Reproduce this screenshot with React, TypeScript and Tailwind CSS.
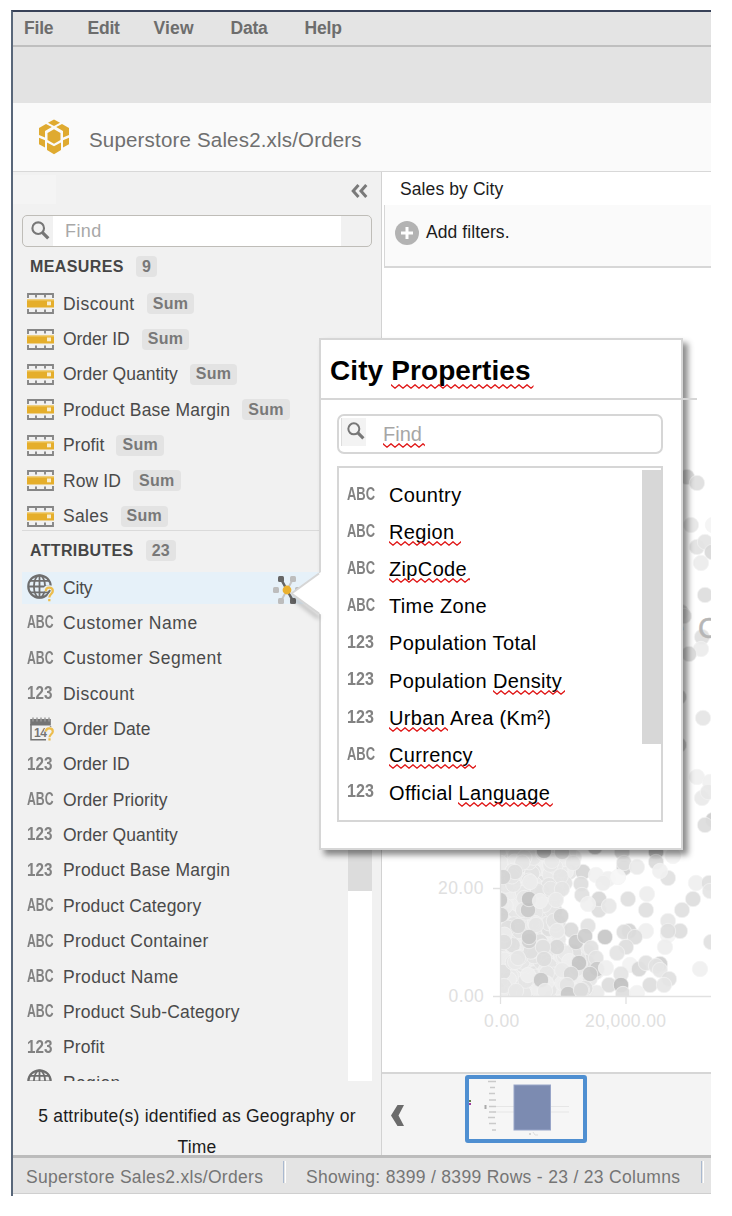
import React from "react";

const measures = [
  { name: "Discount", tracking: "tracking-[0.45px]" },
  { name: "Order ID", tracking: "tracking-[-0.05px]" },
  { name: "Order Quantity", tracking: "tracking-[0px]" },
  { name: "Product Base Margin", tracking: "tracking-[0.2px]" },
  { name: "Profit", tracking: "tracking-[0.1px]" },
  { name: "Row ID", tracking: "tracking-[0.1px]" },
  { name: "Sales", tracking: "tracking-[0.35px]" },
];

type Kind = "geo" | "abc" | "num" | "date";

const attributes: { name: string; kind: Kind; tracking: string }[] = [
  { name: "City", kind: "geo", tracking: "tracking-[-0.2px]" },
  { name: "Customer Name", kind: "abc", tracking: "tracking-[0.57px]" },
  { name: "Customer Segment", kind: "abc", tracking: "tracking-[0.53px]" },
  { name: "Discount", kind: "num", tracking: "tracking-[0.45px]" },
  { name: "Order Date", kind: "date", tracking: "tracking-[0.1px]" },
  { name: "Order ID", kind: "num", tracking: "tracking-[-0.05px]" },
  { name: "Order Priority", kind: "abc", tracking: "tracking-[0.03px]" },
  { name: "Order Quantity", kind: "num", tracking: "tracking-[0px]" },
  { name: "Product Base Margin", kind: "num", tracking: "tracking-[0.2px]" },
  { name: "Product Category", kind: "abc", tracking: "tracking-[0.13px]" },
  { name: "Product Container", kind: "abc", tracking: "tracking-[0.26px]" },
  { name: "Product Name", kind: "abc", tracking: "tracking-[0.31px]" },
  { name: "Product Sub-Category", kind: "abc", tracking: "tracking-[0.17px]" },
  { name: "Profit", kind: "num", tracking: "tracking-[0.1px]" },
  { name: "Region", kind: "geo", tracking: "tracking-[0.35px]" },
];

const properties: { kind: Kind; before?: string; marked?: string; after?: string; wide?: boolean; height: string }[] = [
  { kind: "abc", before: "Country", height: "h-[37.5px]" },
  { kind: "abc", marked: "Region", wide: true, height: "h-[37.5px]" },
  { kind: "abc", marked: "ZipCode", height: "h-[36.5px]" },
  { kind: "abc", before: "Time Zone", height: "h-[37.5px]" },
  { kind: "num", before: "Population Total", height: "h-[36.5px]" },
  { kind: "num", before: "Population ", marked: "Density", height: "h-[38px]" },
  { kind: "num", marked: "Urban", after: " Area (Km²)", height: "h-[37.5px]" },
  { kind: "abc", marked: "Currency", height: "h-[36.5px]" },
  { kind: "num", before: "Official ", marked: "Language", height: "h-[38px]" },
];

function TypeLabel({ kind }: { kind: "abc" | "num" }) {
  return kind === "abc" ? (
    <span className="inline-block origin-left scale-x-[0.7] font-bold text-[#828282]">ABC</span>
  ) : (
    <span className="inline-block origin-left scale-x-[0.87] font-bold text-[#828282]">123</span>
  );
}

function GlobeIcon({ query }: { query: boolean }) {
  return (
    <svg width="28" height="28" viewBox="0 0 28 28" fill="none" className="block">
      <circle cx="12.5" cy="12.5" r="11.2" stroke="#6e6e6e" strokeWidth="2.2" />
      <ellipse cx="12.5" cy="12.5" rx="5.6" ry="11.2" stroke="#6e6e6e" strokeWidth="1.8" />
      <path d="M12.500 1v23M1.500 12.500h22M3 6.800h19M3 18.300h19" stroke="#6e6e6e" strokeWidth="1.800" />
      {query && (
        <>
          <path d="M18.200 17.200c0-2.500 1.600-3.700 3.900-3.700 2.500 0 4 1.400 4 3.500 0 3-3.700 3.300-3.700 6.500M22.400 25v2.400" stroke="#e6f1f9" strokeWidth="4.500" />
          <path d="M18.800 17.200c0-2.300 1.300-3.600 3.400-3.600s3.600 1.300 3.600 3.400c0 2.900-3.500 3.200-3.500 6.500M22.300 25v2.300" stroke="#ecbd4d" strokeWidth="2.300" />
        </>
      )}
    </svg>
  );
}

function DateIcon() {
  return (
    <span className="relative block h-[24px] w-[27px]">
      <svg width="27" height="24" viewBox="0 0 27 24" fill="none" className="block">
        <path d="M4 7v15.800h15M23.500 9v3" stroke="#747474" strokeWidth="1.500" />
        <path d="M3.200 2h20.600v6.500H3.200z" fill="#747474" />
        <path d="M6 .5v4M10 .5v4M14 .5v4M18 .5v4M22 .5v4" stroke="#9a9a9a" strokeWidth="1.500" />
      </svg>
      <span className="absolute top-[9.500px] left-[7px] text-[12px] leading-none font-bold tracking-[-0.5px] text-[#747474]">14</span>
      <svg width="27" height="24" viewBox="0 0 27 24" fill="none" className="absolute top-0 left-0">
        <path d="M19 14.500c0-2 1.200-3.100 3.300-3.100s3.500 1.200 3.500 3c0 2.600-3.300 3-3.300 5.800" stroke="#f1f1f1" strokeWidth="4" />
        <path d="M19 14.500c0-2 1.200-3.100 3.300-3.100s3.500 1.200 3.500 3c0 2.600-3.300 3-3.300 5.800M22.500 21.300v2.200" stroke="#ecbd4d" strokeWidth="2.200" />
      </svg>
    </span>
  );
}

function MeasureIcon() {
  return (
    <svg width="27" height="21" viewBox="0 0 27 21" className="block">
      <path d="M1 5V1h25v4M9 1v3.500M18 1v3.500M1 16v4h25v-4M9 20v-3.500M18 20v-3.500" fill="none" stroke="#868686" strokeWidth="1.900" />
      <rect x="0" y="6.500" width="27" height="8" fill="#e5ae2b" />
      <rect x="0" y="6.500" width="27" height="1" fill="#f2cd70" />
      <rect x="20" y="8.500" width="4" height="3.800" fill="#f8edcf" />
    </svg>
  );
}

function SearchIcon({ size }: { size: number }) {
  return (
    <svg width={size} height={size} viewBox="0 0 19 19" fill="none" className="block">
      <circle cx="7.200" cy="7.200" r="5.800" stroke="#777" strokeWidth="2.100" />
      <path d="M11.300 11.300l6 6" stroke="#777" strokeWidth="3.300" />
    </svg>
  );
}

function NetworkIcon() {
  return (
    <svg width="28" height="28" viewBox="0 0 28 28" className="block">
      <path d="M14 14L20 3M14 14L8 25" stroke="#c6c6c6" strokeWidth="2" />
      <path d="M14 14L8 3M14 14l6 11" stroke="#666" strokeWidth="2.600" />
      <g fill="#bdbdbd">
        <rect x="17" y="0" width="6" height="6" rx="1.500" />
        <rect x="5" y="22" width="6" height="6" rx="1.500" />
        <rect x="0" y="11" width="6" height="6" rx="1.500" />
        <rect x="22" y="11" width="6" height="6" rx="1.500" />
      </g>
      <rect x="5" y="0" width="6" height="6" rx="1.500" fill="#666" />
      <rect x="17" y="22" width="6" height="6" rx="1.500" fill="#666" />
      <circle cx="14" cy="14" r="4.400" fill="#eab12f" />
    </svg>
  );
}

function CubeLogo() {
  return (
    <svg width="32" height="36" viewBox="0 0 32 36" className="block" fill="#dfaa30">
      <path d="M16 .5l6 3.300-6 3.200-6-3.200z" />
      <path d="M8 5l5.800 3.100L7 12v6.500L1 16V9z" />
      <path d="M24 5l-5.800 3.100L25 12v6.500l6-2.500V9z" />
      <path d="M16 10.300l6.500 3.700v7L16 24.700 9.500 21v-7z" />
      <path d="M1 18.700l6 2.500v7.300l-6-3.300zM31 18.700l-6 2.500v7.300l6-3.300z" />
      <path d="M9 23.500l7 3.700 7-3.700v7.500l-7 4.200L9 31z" />
    </svg>
  );
}

function Squiggle({ id }: { id: string }) {
  return (
    <svg width="100%" height="5" className="block">
      <defs>
        <pattern id={id} width="8" height="5" patternUnits="userSpaceOnUse">
          <path d="M-1 0L0 .8 4 4.200 8 .8 9 0" fill="none" stroke="#e01818" strokeWidth="1.300" />
        </pattern>
      </defs>
      <rect width="100%" height="5" fill={`url(#${id})`} />
    </svg>
  );
}

function Marked({ children, id, wide }: { children: React.ReactNode; id: string; wide?: boolean }) {
  return (
    <span className="relative inline-block">
      {children}
      <span className={wide ? "absolute -right-[7px] bottom-[-2px] left-0" : "absolute -right-[3px] bottom-[-2px] left-0"}>
        <Squiggle id={id} />
      </span>
    </span>
  );
}

function Badge({ children }: { children: React.ReactNode }) {
  return (
    <span className="flex h-[21px] items-center rounded-[4px] bg-[#e3e3e3] px-[6px] text-[16px] font-bold tracking-[0.3px] text-[#787878]">
      {children}
    </span>
  );
}

const dots: [number, number, string][] = [
  [515, 872, "#dedede"], [544, 851, "#bebebe"], [562, 852, "#d3d3d3"], [595, 847, "#c8c8c8"], [656, 852, "#bcbcbc"], [622, 852, "#dadada"],
  [583, 872, "#d4d4d4"], [624, 868, "#cfcfcf"], [624, 863, "#dedede"], [637, 867, "#e9e9e9"], [656, 862, "#d8d8d8"], [673, 856, "#f2f2f2"],
  [668, 878, "#e0e0e0"], [660, 871, "#f0f0f0"], [596, 875, "#f1f1f1"], [608, 879, "#eeeeee"], [603, 883, "#ececec"], [618, 877, "#f6f6f6"],
  [581, 884, "#dddddd"], [582, 895, "#dfdfdf"], [562, 889, "#e3e3e3"], [530, 882, "#ebebeb"], [573, 863, "#e5e5e5"], [503, 877, "#d2d2d2"],
  [528, 910, "#c8c8c8"], [529, 899, "#c1c1c1"], [500, 900, "#c9c9c9"], [501, 915, "#cecece"], [556, 900, "#e9e9e9"], [540, 901, "#eeeeee"],
  [599, 910, "#dddddd"], [599, 899, "#d6d6d6"], [609, 906, "#e7e7e7"], [588, 904, "#f0f0f0"], [628, 899, "#dedede"], [647, 894, "#ededed"],
  [646, 910, "#dfdfdf"], [693, 899, "#dddddd"], [696, 883, "#eeeeee"], [709, 883, "#dedede"], [710, 891, "#e4e4e4"], [682, 910, "#dfdfdf"],
  [561, 916, "#d2d2d2"], [536, 925, "#e5e5e5"], [518, 926, "#d6d6d6"], [588, 926, "#e1e1e1"], [668, 921, "#e5e5e5"], [668, 935, "#f4f4f4"],
  [680, 931, "#dddddd"], [668, 931, "#dedede"], [646, 931, "#eeeeee"], [629, 931, "#d3d3d3"], [624, 932, "#dddddd"], [635, 937, "#dcdcdc"],
  [529, 941, "#d0d0d0"], [529, 937, "#c9c9c9"], [571, 930, "#d9d9d9"], [557, 931, "#e8e8e8"], [576, 942, "#c8c8c8"], [585, 936, "#cccccc"],
  [605, 937, "#c5c5c5"], [557, 947, "#d7d7d7"], [591, 948, "#e0e0e0"], [543, 947, "#dedede"], [504, 942, "#dedede"], [626, 947, "#dddddd"],
  [617, 953, "#e3e3e3"], [665, 947, "#ededed"], [711, 942, "#e0e0e0"], [544, 959, "#dddddd"], [596, 958, "#e2e2e2"], [579, 963, "#c3c3c3"],
  [597, 969, "#c9c9c9"], [518, 958, "#e6e6e6"], [606, 968, "#eeeeee"], [630, 965, "#f2f2f2"], [639, 969, "#d6d6d6"], [646, 963, "#e0e0e0"],
  [660, 964, "#cfcfcf"], [656, 966, "#e2e2e2"], [660, 970, "#e6e6e6"], [700, 969, "#efefef"], [528, 975, "#eeeeee"], [571, 974, "#d4d4d4"],
  [590, 974, "#c9c9c9"], [541, 980, "#c6c6c6"], [621, 974, "#e3e3e3"], [609, 985, "#dbdbdb"], [621, 985, "#bfbfbf"], [669, 979, "#dfdfdf"],
  [650, 985, "#dddddd"], [664, 985, "#e5e5e5"], [567, 985, "#e2e2e2"], [582, 990, "#d9d9d9"], [568, 994, "#c7c7c7"], [581, 990, "#dcdcdc"],
  [623, 994, "#dddddd"], [637, 993, "#f1f1f1"], [504, 986, "#e4e4e4"], [516, 991, "#e7e7e7"], [545, 991, "#e9e9e9"],
  [687, 477, "#d3d3d3"], [697, 483, "#dedede"], [691, 525, "#e5e5e5"], [713, 525, "#f4f4f4"], [697, 547, "#e1e1e1"], [705, 542, "#e3e3e3"],
  [712, 552, "#d8d8d8"], [701, 563, "#ebebeb"], [705, 595, "#dddddd"], [681, 612, "#d6d6d6"], [684, 616, "#dadada"], [702, 637, "#dedede"],
  [701, 649, "#ebebeb"], [689, 654, "#d8d8d8"], [679, 697, "#d2d2d2"], [703, 718, "#e4e4e4"], [679, 745, "#cfcfcf"], [697, 777, "#efefef"],
  [710, 782, "#f0f0f0"], [702, 798, "#e9e9e9"], [708, 792, "#e8e8e8"], [713, 820, "#cccccc"], [705, 825, "#dcdcdc"],
];

/** Deterministic cloud of overlapping low-value points near the origin. */
function makeCloud() {
  const tones = ["#e4e4e4", "#e9e9e9", "#ececec", "#dedede", "#e6e6e6", "#eeeeee", "#e2e2e2"];
  const cloud: [number, number, string][] = [];
  let seed = 41;
  const next = () => {
    seed = (seed * 16807) % 2147483647;
    return seed / 2147483647;
  };
  for (let i = 0; i < 520; i++) {
    const y = 848 + next() * 146;
    const reach = y < 880 ? 78 : y < 925 ? 62 + (Math.abs(y - 905) / 20) * 10 : 78 + (y - 925) * 0.5;
    const x = 500 + next() * reach * (0.75 + next() * 0.25);
    cloud.push([x, y, tones[Math.floor(next() * tones.length)]]);
  }
  return cloud;
}

const cloud = makeCloud();

function Scatter() {
  return (
    <svg viewBox="382 268 329 804" width="329" height="804" className="block" fontFamily="Liberation Sans, Arial, sans-serif">
      <clipPath id="plot">
        <rect x="500" y="300" width="211" height="696" />
      </clipPath>
      <g clipPath="url(#plot)">
        {[...cloud, ...dots].map(([x, y, tone], i) => (
          <circle key={i} cx={x} cy={y} r="7.700" fill={tone} fillOpacity="0.9" stroke="#f4f4f4" strokeWidth="0.7" />
        ))}
      </g>
      <path d="M493 888.500h7M493 996.500h218M500.500 850v154M626 997v7" stroke="#e1e1e1" strokeWidth="1.300" fill="none" />
      <g fill="#e0e0e0" fontSize="17.500" letterSpacing="0.400">
        <text x="438" y="894">20.00</text>
        <text x="448.500" y="1001.500">0.00</text>
        <text x="484" y="1026.500">0.00</text>
        <text x="585" y="1026.500">20,000.00</text>
      </g>
      <g fontSize="29" fill="#b6b6b6" stroke="#b6b6b6" strokeWidth="0.500">
        <text x="668" y="638">e</text>
        <text x="698" y="638">C</text>
      </g>
    </svg>
  );
}

function Sidebar() {
  return (
    <aside className="flex w-[369px] shrink-0 flex-col border-r border-[#d2d2d2] bg-[#f1f1f1]">
      <div className="flex h-[43px] shrink-0 justify-between">
        <div className="mt-[3px] h-[29px] w-[43px] bg-[#f4f4f4]" />
        <svg width="17" height="14" viewBox="0 0 17 14" className="mt-[12px] mr-[13px]" fill="none" stroke="#7a7a7a" strokeWidth="3">
          <path d="M7.500 1L2.200 7l5.300 6M15.300 1L10 7l5.300 6" />
        </svg>
      </div>
      <div className="mr-[9px] ml-[9px] flex h-[32px] shrink-0 overflow-hidden rounded-[5px] border-[1.500px] border-[#bfbdb8]">
        <div className="flex w-[30px] items-center pb-[1px] pl-[8px]">
          <SearchIcon size={19} />
        </div>
        <div className="flex w-[288px] items-center bg-white pt-[1px] pl-[12px] text-[18px] tracking-[0.4px] text-[#a8a8a8]">Find</div>
      </div>
      <div className="flex h-[39px] shrink-0 items-center gap-[12px] pl-[17px] text-[16px] font-bold text-[#454545]">
        <span className="tracking-[0.4px]">MEASURES</span>
        <Badge>9</Badge>
      </div>
      <div className="mx-[9px] flex h-[245px] shrink-0 flex-col border-b border-[#dadada]">
        {measures.map((m) => (
          <div key={m.name} className="flex h-[35.400px] shrink-0 items-center pl-[5px]">
            <MeasureIcon />
            <span className={`mr-[12px] ml-[9px] text-[17.500px] whitespace-nowrap text-[#4a4a4a] ${m.tracking}`}>{m.name}</span>
            <Badge>Sum</Badge>
          </div>
        ))}
      </div>
      <div className="flex h-[39px] shrink-0 items-center gap-[12px] pl-[17px] text-[16px] font-bold text-[#454545]">
        <span className="tracking-[0.35px]">ATTRIBUTES</span>
        <Badge>23</Badge>
      </div>
      <div className="mx-[9px] flex h-[511px] shrink-0 overflow-hidden">
        <div className="flex grow flex-col">
          {attributes.map((a, i) => (
            <div key={a.name} className={`flex h-[35.370px] shrink-0 items-center ${i === 0 ? "bg-[#e6f1f9] bg-clip-content py-[1.500px]" : ""}`}>
              <div className="flex w-[41px] shrink-0 items-center pl-[5px] text-[17.500px] leading-none">
                {a.kind === "geo" && <GlobeIcon query={i === 0} />}
                {a.kind === "date" && <DateIcon />}
                {(a.kind === "abc" || a.kind === "num") && <TypeLabel kind={a.kind} />}
              </div>
              <span className={`text-[17.500px] whitespace-nowrap text-[#4a4a4a] ${a.tracking}`}>{a.name}</span>
              {i === 0 && (
                <span className="mt-[5px] mr-[47px] ml-auto">
                  <NetworkIcon />
                </span>
              )}
            </div>
          ))}
        </div>
        <div className="w-[24px] shrink-0 bg-white">
          <div className="h-[321px] bg-[#dcdcdc]" />
        </div>
      </div>
      <div className="min-h-0 grow overflow-hidden pt-[20px] text-center text-[17.500px] leading-[31px] tracking-[0.22px] text-[#1c1c1c]">
        5 attribute(s) identified as Geography or
        <br />
        Time
      </div>
    </aside>
  );
}

function Thumbnail() {
  return (
    <div className="h-[68px] w-[122px] rounded-[3px] border-[4px] border-[#4f8fd1] bg-[#f6f6f6]">
      <svg width="114" height="60" viewBox="0 0 114 60" className="block">
        <path d="M24 27.500h76M24 33h76" stroke="#e6e6e6" />
        <path d="M19 2.500h8M21 8.500h5M20 14.500h6M20 21h7M20 27.500h7M20 33h7M19 38.500h7M20 44.500h7M23 51h4M60 55h2" stroke="#cacaca" strokeWidth="1.500" />
        <path d="M16.500 26v4" stroke="#aaa" strokeWidth="2" />
        <path d="M0 22h2" stroke="#657c4c" strokeWidth="2" />
        <path d="M0 25h2" stroke="#a13da1" strokeWidth="2" />
        <rect x="45" y="6" width="36.500" height="45" fill="#7c8bb1" stroke="#98a5c8" />
        <path d="M64 53l2 3h3" stroke="#ddd" fill="none" />
      </svg>
    </div>
  );
}

function CityPopup() {
  return (
    <div className="absolute top-[338px] left-[319px] h-[512px] w-[364px] border-2 border-[#d6d6d6] bg-white shadow-[5px_5px_6px_rgba(0,0,0,0.450)]">
      <svg width="31" height="52" viewBox="0 0 31 52" className="absolute top-[228px] left-[-31px] overflow-visible">
        <path d="M2 25l27 21" fill="none" stroke="#000" strokeOpacity="0.250" strokeWidth="3" transform="translate(0 4)" className="blur-[2px]" />
        <path d="M31 4L1.500 25.500 31 46.500z" fill="#fff" />
        <path d="M29 5.500L1.500 25.500 29 45.500" fill="none" stroke="#d6d6d6" strokeWidth="2" />
      </svg>
      <div className="flex h-[60px] w-[376px] items-center border-b-2 border-[#d6d6d6] pt-[3px] pl-[9px] text-[28px] font-bold text-black">
        <h2 className="leading-[32px] tracking-[0.1px] whitespace-pre">
          City <Marked id="w-title">Properties</Marked>
        </h2>
      </div>
      <div className="mt-[14px] ml-[16px] flex h-[40px] w-[326px] rounded-[7px] border-2 border-[#d6d6d6]">
        <div className="mt-[2px] ml-[2px] flex h-[28px] w-[25px] justify-center border-l border-[#ddd] bg-[#f3f3f3] pt-[4px] pl-[4px]">
          <SearchIcon size={18} />
        </div>
        <span className="mt-[7px] ml-[17px] text-[20px] leading-[23px] text-[#a6a6a6]">
          <Marked id="w-find">Find</Marked>
        </span>
      </div>
      <div className="mt-[12px] ml-[16px] flex h-[356px] w-[326px] justify-between border-2 border-[#d6d6d6]">
        <div className="flex flex-col pt-[8.500px] pl-[8px]">
          {properties.map((p, i) => (
            <div key={i} className={`flex shrink-0 items-center ${p.height}`}>
              <span className="mt-[-3px] w-[42px] text-[18.500px] leading-none">
                <TypeLabel kind={p.kind === "abc" ? "abc" : "num"} />
              </span>
              <span className="text-[20px] leading-[23px] tracking-[0.350px] whitespace-pre text-black">
                {p.before}
                {p.marked && (
                  <Marked id={`w-${i}`} wide={p.wide}>
                    {p.marked}
                  </Marked>
                )}
                {p.after}
              </span>
            </div>
          ))}
        </div>
        <div className="mt-[2px] h-[274px] w-[19px] bg-[#d7d7d7]" />
      </div>
    </div>
  );
}

export default function App() {
  return (
    <div className="relative h-[1216px] w-[732px] overflow-hidden bg-white pt-[10px] pl-[11px] font-['Liberation_Sans',Arial,sans-serif]">
      <div className="flex h-[1186px] w-[700px] flex-col overflow-hidden border-t-2 border-l-2 border-t-[#384258] border-l-[#59677a]">
        <nav className="flex h-[35px] shrink-0 items-center border-b-2 border-[#bfbfbf] bg-[#e4e4e4] pl-[11px] text-[17.500px] font-bold tracking-[-0.2px] text-[#6d6d6d]">
          <span className="w-[63.500px]">File</span>
          <span className="w-[66px]">Edit</span>
          <span className="w-[77px] tracking-[0.2px]">View</span>
          <span className="w-[74px]">Data</span>
          <span>Help</span>
        </nav>
        <div className="h-[56px] shrink-0 bg-[#e3e3e3]" />
        <header className="flex h-[69px] shrink-0 items-center border-b border-[#d8d8d8] bg-[#fafafa] pl-[25px]">
          <CubeLogo />
          <h1 className="mt-[7px] ml-[19px] text-[20.500px] tracking-[0.180px] text-[#6f6f6f]">Superstore Sales2.xls/Orders</h1>
        </header>
        <div className="flex h-[983px] shrink-0">
          <Sidebar />
          <main className="flex w-[329px] shrink-0 flex-col bg-white">
            <div className="flex h-[33px] shrink-0 items-center pt-[2px] pl-[18px] text-[17.500px] tracking-[0.100px] text-[#1c1c1c]">Sales by City</div>
            <div className="ml-[2px] flex h-[63px] shrink-0 items-center border-b-2 border-l border-[#d7d7d7] bg-[#fafafa] pb-[6px] pl-[10px] text-[17.500px] tracking-[0.080px] text-[#1c1c1c]">
              <svg width="24" height="24" viewBox="0 0 24 24" className="mr-[7px] block">
                <circle cx="12" cy="12" r="12" fill="#b3b3b3" />
                <path d="M12 6v12M6 12h12" stroke="#fff" strokeWidth="3" />
              </svg>
              Add filters.
            </div>
            <div className="h-[804px] shrink-0 overflow-hidden">
              <Scatter />
            </div>
            <div className="flex grow border-t-2 border-[#d6d6d6] bg-[#f4f4f4]">
              <svg width="13" height="21" viewBox="0 0 13 21" className="mt-[31px] ml-[9px]">
                <path d="M6.500 0H13L7.500 10.500 13 21H6.500L0 10.500z" fill="#6b6b6b" />
              </svg>
              <div className="mt-[1px] ml-[61px]">
                <Thumbnail />
              </div>
            </div>
          </main>
        </div>
        <footer className="flex h-[39px] shrink-0 items-center border-t-[3px] border-b border-t-[#bcbcbc] border-b-[#cfcfcf] bg-[#e4e4e4] pl-[13px] text-[17.500px] tracking-[0.310px] whitespace-nowrap text-[#757575]">
          <span className="w-[257px] shrink-0 pt-[4px]">Superstore Sales2.xls/Orders</span>
          <span className="mb-[8px] h-[22px] w-[3px] shrink-0 border-r border-l border-r-white border-l-[#a9b9d0]" />
          <span className="w-[415px] shrink-0 pt-[4px] pl-[20px]">Showing: 8399 / 8399 Rows - 23 / 23 Columns</span>
          <span className="mb-[8px] h-[22px] w-[3px] shrink-0 border-r border-l border-r-white border-l-[#a9b9d0]" />
        </footer>
      </div>
      <CityPopup />
    </div>
  );
}
